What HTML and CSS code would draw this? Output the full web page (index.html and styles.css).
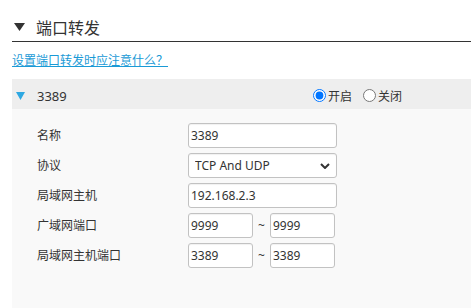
FILE: index.html
```html
<html>

<head>
<meta charset="utf-8">
<link rel="stylesheet" href="styles.css">
</head>

<body>

<div class="page">
<h2 class="title">
<svg class="arrow-title" width="11" height="8" viewBox="0 0 11 8"><polygon points="0,0 11,0 5.5,8" fill="#333"></polygon></svg>
<span>端口转发</span>
</h2>

<a class="tip" href="#">设置端口转发时应注意什么？</a>

<div class="rule-head">
<svg class="arrow-rule" width="9" height="8" viewBox="0 0 9 8"><polygon points="0,0 9,0 4.5,8" fill="#2ea8e2"></polygon></svg>
<span class="rule-name">3389</span>
<label class="radio"><input type="radio" name="st" checked>开启</label>
<label class="radio"><input type="radio" name="st">关闭</label>
</div>

<div class="rule-body">
<div class="row">
<span class="label">名称</span>
<input class="field" type="text" value="3389">
</div>
<div class="row">
<span class="label">协议</span>
<div class="select-wrap">
<select class="field select">
<option>TCP And UDP</option>
<option>TCP</option>
<option>UDP</option>
</select>
<svg class="chevron" width="10" height="6" viewBox="0 0 10 6"><polyline points="1,1 5,5 9,1" fill="none" stroke="#333" stroke-width="2"></polyline></svg>
</div>
</div>
<div class="row">
<span class="label">局域网主机</span>
<input class="field" type="text" value="192.168.2.3">
</div>
<div class="row">
<span class="label">广域网端口</span>
<input class="field short" type="text" value="9999">
<span class="tilde">~</span>
<input class="field short" type="text" value="9999">
</div>
<div class="row">
<span class="label">局域网主机端口</span>
<input class="field short" type="text" value="3389">
<span class="tilde">~</span>
<input class="field short" type="text" value="3389">
</div>
</div>
</div>

</body>

</html>
```

FILE: styles.css
```css
html
{
	font-family: "Noto Sans", "Noto Sans CJK SC", sans-serif;
	color: #333333;
}

body
{
	margin: 0;
}

.page
{
	padding-left: 12px;
}

.title
{
	display: flex;
	align-items: center;
	box-sizing: border-box;
	height: 42px;
	margin: 0;
	padding: 12px 0 0 2px;
	border-bottom: 1px solid #333333;
	font-size: 16px;
	font-weight: normal;
}

.arrow-title
{
	margin-right: 11px;
}

.tip
{
	display: block;
	width: max-content;
	margin-top: 11px;
	font-size: 12px;
	line-height: 16px;
	color: #1a9ad6;
}

.rule-head
{
	display: flex;
	align-items: center;
	box-sizing: border-box;
	height: 30px;
	margin-top: 10px;
	padding: 3px 0 0 4px;
	background-color: #EEEEEE;
}

.arrow-rule
{
	margin-right: 12px;
}

.rule-name
{
	width: 276px;
	font-size: 13px;
}

.radio
{
	display: flex;
	align-items: center;
	margin-right: 11px;
	font-size: 12px;
}

.radio input
{
	width: 13px;
	height: 13px;
	margin: 0 2px 0 0;
}

.rule-body
{
	min-height: 200px;
	padding: 11px 0 0 25px;
	background-color: #F9F9F9;
}

.row
{
	display: flex;
	align-items: center;
	height: 30px;
}

.label
{
	width: 151px;
	font-size: 12px;
}

.field
{
	box-sizing: border-box;
	width: 149px;
	height: 25px;
	margin: 0;
	padding: 0 2px;
	border: 1px solid #C2C2C2;
	border-radius: 3px;
	background-color: #FFFFFF;
	box-shadow: inset 0 1px 1px rgba(0, 0, 0, 0.06);
	font-family: "Noto Sans", sans-serif;
	font-size: 12px;
	color: #333333;
}

.select-wrap
{
	position: relative;
	height: 25px;
}

.select
{
	appearance: none;
	padding-left: 6px;
}

.chevron
{
	position: absolute;
	right: 7px;
	top: 10px;
	pointer-events: none;
}

.short
{
	width: 65px;
}

.tilde
{
	width: 17px;
	text-align: center;
	font-size: 12px;
}
```
